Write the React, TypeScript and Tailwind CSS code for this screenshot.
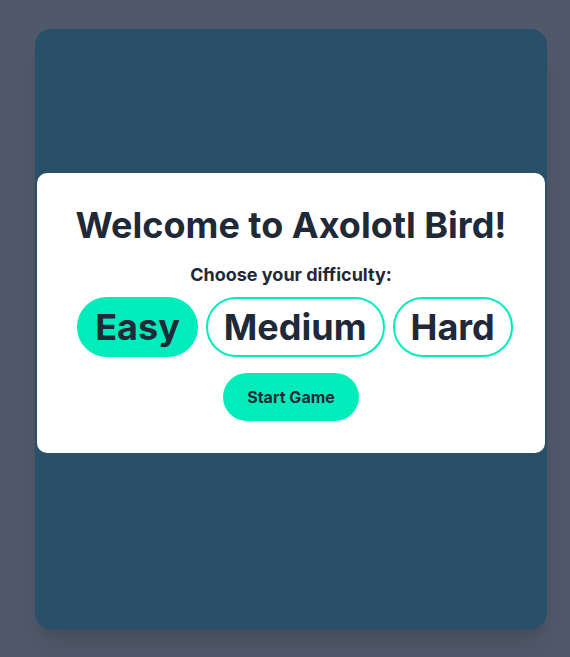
import React, { useState } from 'react';

const levels = ['Easy', 'Medium', 'Hard'] as const;

export default function App() {
  const [level, setLevel] = useState<(typeof levels)[number]>('Easy');

  return (
    <div
      className="min-h-screen bg-[#4f5969] pt-[29px] pl-[35px]"
      style={{ fontFamily: 'Inter, "Noto Sans", sans-serif' }}
    >
      <div className="w-[512px] h-[600px] bg-[#2a4f69] rounded-2xl shadow-xl flex flex-col items-center pt-[144px]">
        {/* Start overlay */}
        <div className="w-[508px] bg-white rounded-[10px] p-8 flex flex-col items-center text-[#1f2937]">
          <h1 className="text-4xl font-bold mb-4">Welcome to Axolotl Bird!</h1>
          <p className="text-lg font-bold mb-2">Choose your difficulty:</p>
          <div className="flex mb-4">
            {levels.map((l) => (
              <button
                key={l}
                onClick={() => setLevel(l)}
                className={
                  'ml-2 px-4 py-2 text-4xl font-bold rounded-full border-2 border-[#00edbb] ' +
                  (level === l ? 'bg-[#00edbb]' : 'bg-white')
                }
              >
                {l}
              </button>
            ))}
          </div>
          <button className="px-6 py-3 bg-[#00edbb] rounded-full font-bold text-base">
            Start Game
          </button>
        </div>
      </div>
    </div>
  );
}
